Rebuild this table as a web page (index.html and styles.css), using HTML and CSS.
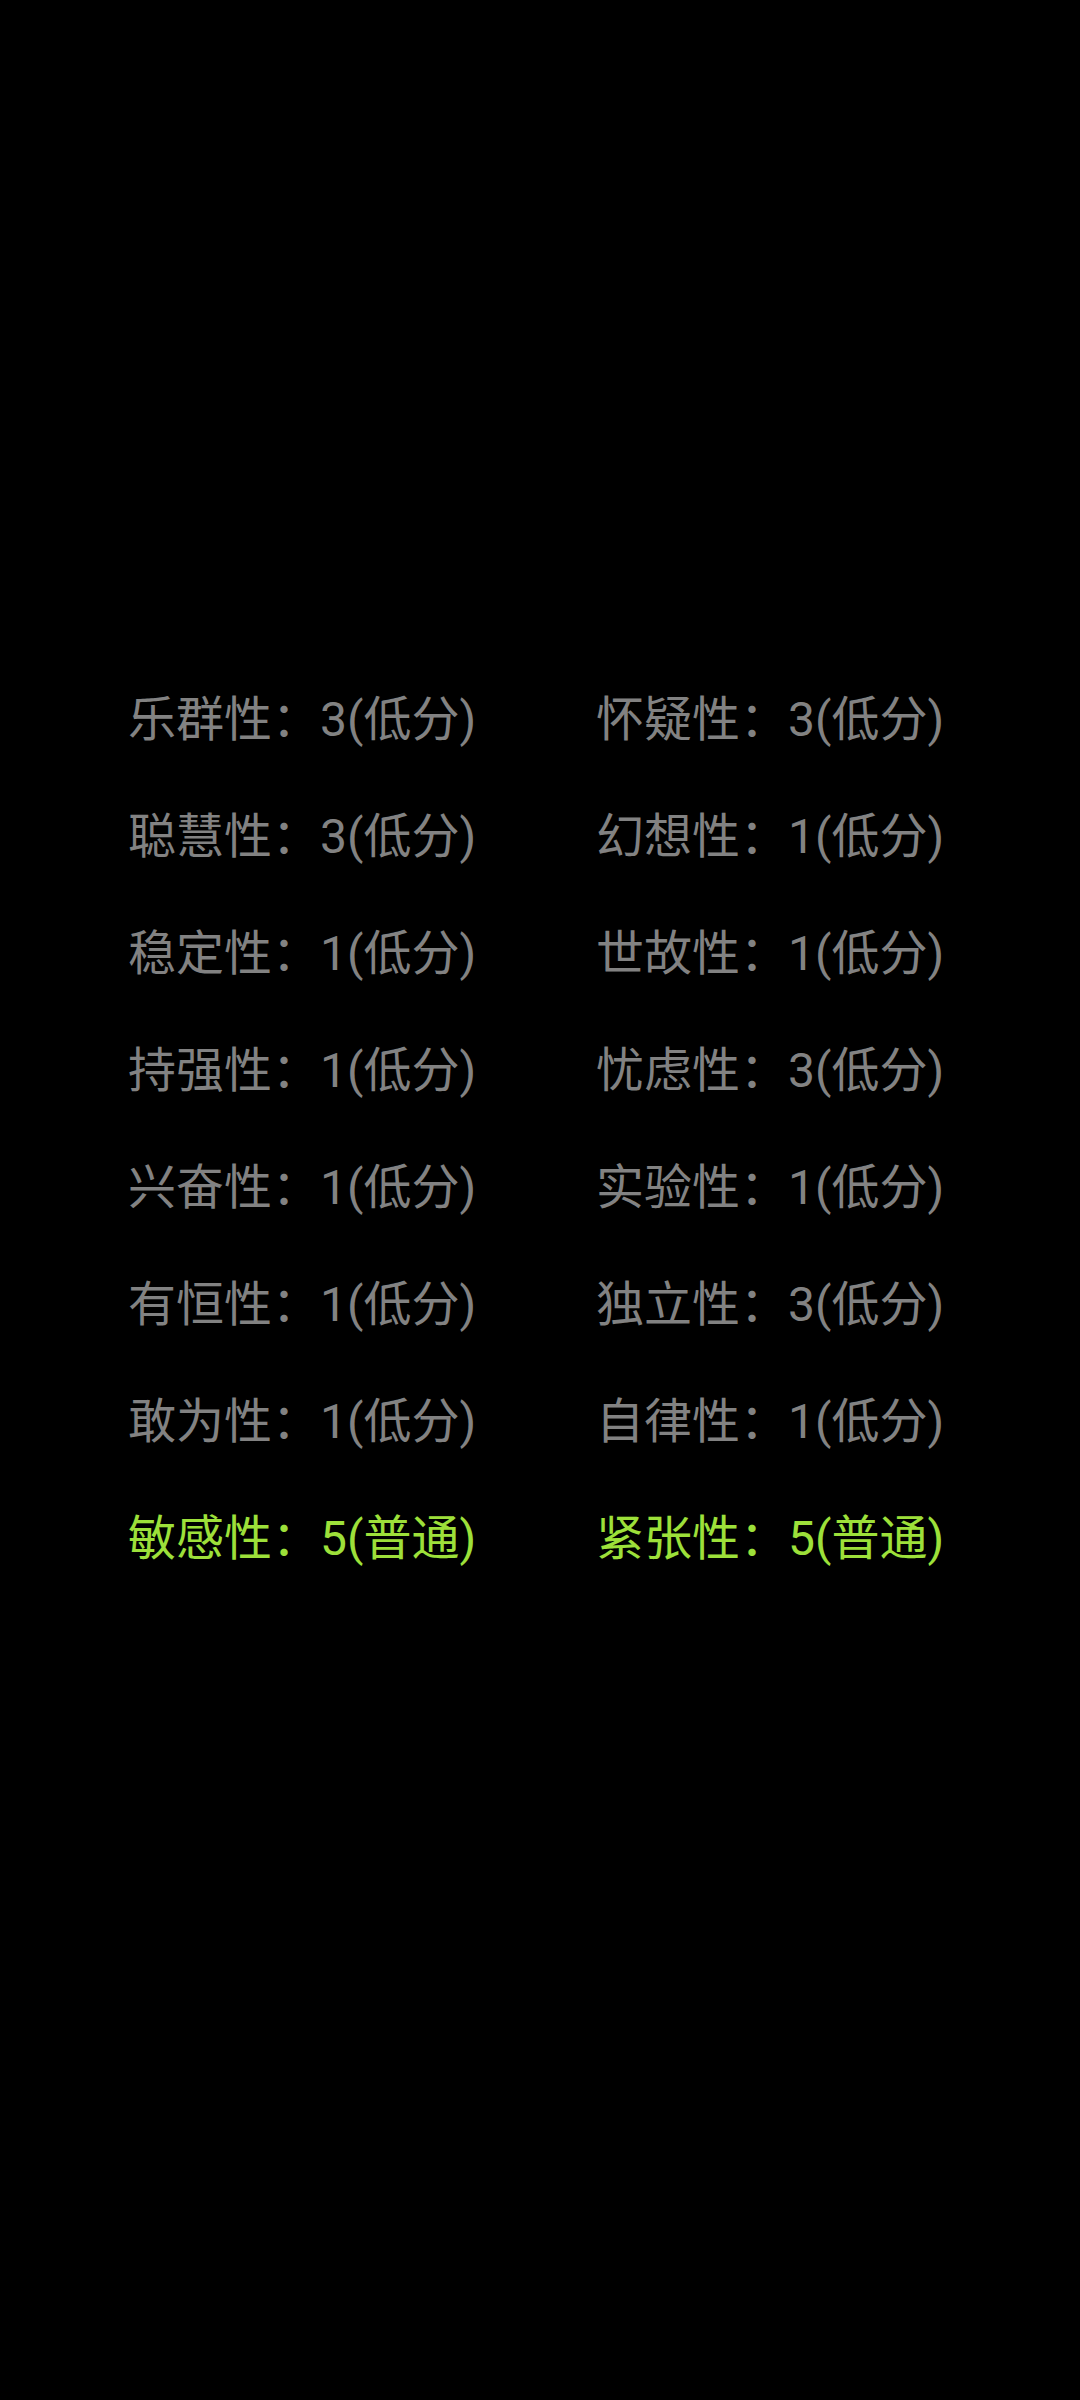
FILE: index.html
```html
<!DOCTYPE html>
<html lang="zh-CN">
<head>
    <meta charset="UTF-8">
    <meta name="viewport" content="width=device-width, initial-scale=1.0">
    <title>16PF</title>
    <link rel="stylesheet" href="styles.css">
</head>
<body>
    <div class="screen">
        <div class="factors">
            <div class="factor">乐群性：3(低分)</div>
            <div class="factor">怀疑性：3(低分)</div>
            <div class="factor">聪慧性：3(低分)</div>
            <div class="factor">幻想性：1(低分)</div>
            <div class="factor">稳定性：1(低分)</div>
            <div class="factor">世故性：1(低分)</div>
            <div class="factor">持强性：1(低分)</div>
            <div class="factor">忧虑性：3(低分)</div>
            <div class="factor">兴奋性：1(低分)</div>
            <div class="factor">实验性：1(低分)</div>
            <div class="factor">有恒性：1(低分)</div>
            <div class="factor">独立性：3(低分)</div>
            <div class="factor">敢为性：1(低分)</div>
            <div class="factor">自律性：1(低分)</div>
            <div class="factor normal">敏感性：5(普通)</div>
            <div class="factor normal">紧张性：5(普通)</div>
        </div>
    </div>
</body>
</html>
```

FILE: styles.css
```css
html, body {
    margin: 0;
    padding: 0;
    background: #000;
}
.screen {
    width: 1080px;
    height: 2400px;
    box-sizing: border-box;
    padding-top: 661px;
    padding-left: 128px;
}
.factors {
    display: grid;
    grid-template-columns: 468px 468px;
}
.factor {
    font-family: Roboto, "Noto Sans CJK SC", sans-serif;
    font-size: 48px;
    line-height: 117px;
    height: 117px;
    color: #828282;
    white-space: nowrap;
}
.normal {
    color: #9de03a;
}
```
